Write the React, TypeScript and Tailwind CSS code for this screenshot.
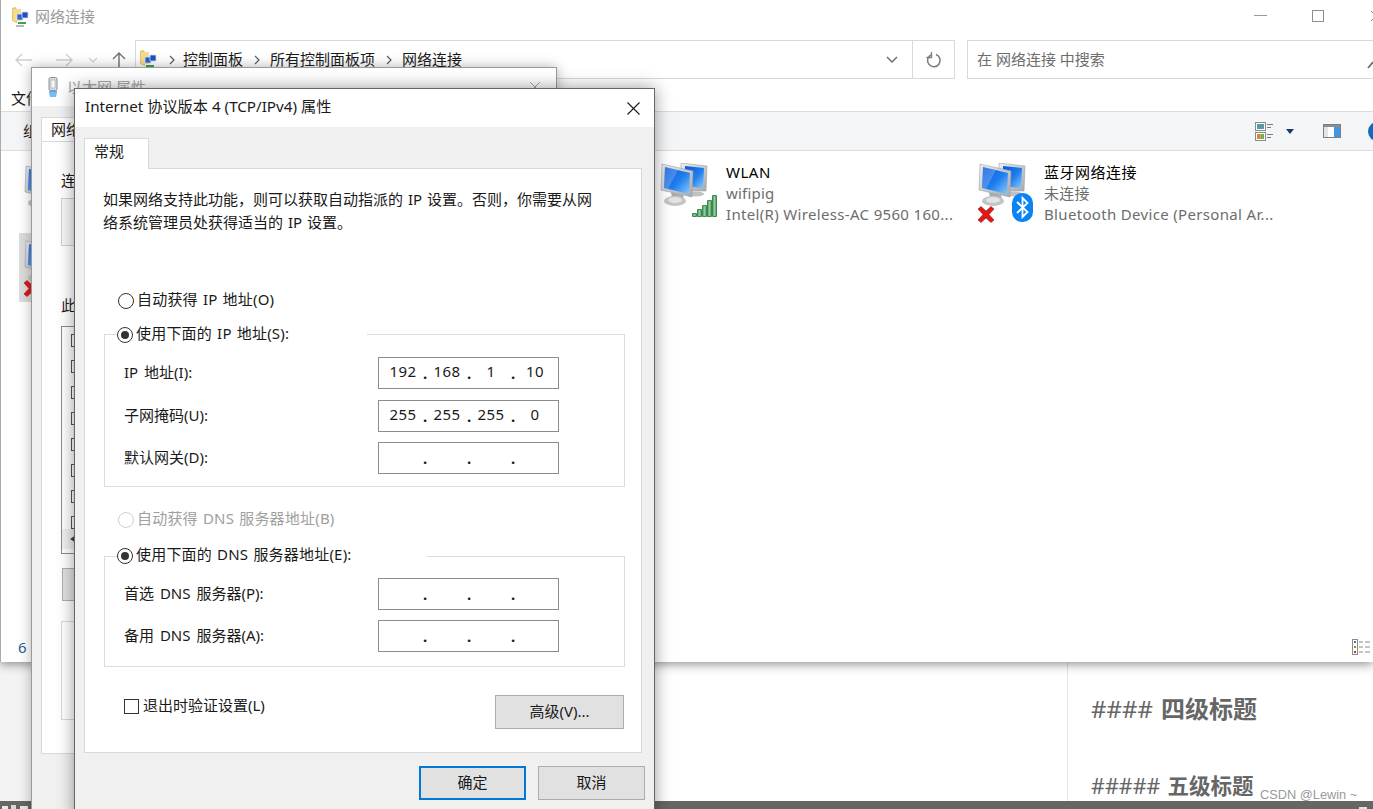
import React from "react";

const sans = "font-['Noto_Sans','Noto_Sans_CJK_SC',sans-serif]";

function NetworkIcon({ className = "" }: { className?: string }) {
  return (
    <svg viewBox="0 0 48 44" width={48} height={44} className={className}>
      <defs>
        <linearGradient id="scr" x1="0" y1="0" x2="1" y2="1">
          <stop offset="0" stopColor="#0a56dc" />
          <stop offset="0.55" stopColor="#1f7fee" />
          <stop offset="1" stopColor="#8fcbf8" />
        </linearGradient>
        <linearGradient id="bez" x1="0" y1="0" x2="1" y2="1">
          <stop offset="0" stopColor="#eceef0" />
          <stop offset="1" stopColor="#a4a9ad" />
        </linearGradient>
      </defs>
      <path d="M21 0 L47 3 L46 28 L30 28 L21 25 Z" fill="url(#bez)" stroke="#9ca1a5" strokeWidth="0.6" />
      <path d="M25 3 L44 5 L43 25 L25 23 Z" fill="url(#scr)" />
      <ellipse cx="36" cy="31" rx="8" ry="2.5" fill="#bfc2c3" />
      <path d="M2 1 L33 8 L32 34 L1 27 Z" fill="url(#bez)" stroke="#9ca1a5" strokeWidth="0.6" />
      <path d="M5 4 L30 10 L29 31 L4 25 Z" fill="url(#scr)" />
      <path d="M5 4 L18 7 L8 26 L4 25 Z" fill="#ffffff" opacity="0.2" />
      <path d="M11 29 L23 32 L24 36 L12 35 Z" fill="#a8acae" />
      <ellipse cx="15" cy="38" rx="11" ry="5" fill="#c2c4c5" />
      <ellipse cx="15" cy="37" rx="7" ry="3" fill="#e2e3e4" />
    </svg>
  );
}

function FolderIcon() {
  return (
    <svg viewBox="0 0 18 20" width={18} height={20} className="shrink-0">
      <path d="M1 1 L5 0 L6 3 L6 16 L1 14 Z" fill="#e6c568" />
      <path d="M2 2 L10 2 L10 14 L2 14 Z" fill="#f3dc8e" />
      <path d="M6 7 L12 7 L12 13 L6 13 Z" fill="#2a62d8" stroke="#d8dde0" strokeWidth="0.8" />
      <path d="M11 5 L17 5 L17 11 L11 11 Z" fill="#1e4fc4" stroke="#d8dde0" strokeWidth="0.8" />
      <path d="M7 15 L15 15 L15 17 L7 17 Z" fill="#3fa34d" />
      <path d="M5 18 L13 18 L13 20 L5 20 Z" fill="#b5b9ba" />
    </svg>
  );
}

function RedCross({ className = "" }: { className?: string }) {
  return (
    <svg viewBox="0 0 18 17" width={18} height={17} className={className}>
      <path d="M1 3 L4 0.5 L9 5 L14 0.5 L17 3 L12 8.5 L17 14 L14 16.5 L9 12 L4 16.5 L1 14 L6 8.5 Z" fill="#dd1a1a" stroke="#b01010" strokeWidth="0.6" />
    </svg>
  );
}

function SignalBars({ className = "" }: { className?: string }) {
  const bars = [
    [0, 18, 4],
    [5, 14, 8],
    [10, 10, 12],
    [15, 5, 17],
    [20, 0, 22],
  ];
  return (
    <svg viewBox="0 0 25 22" width={25} height={22} className={className}>
      {bars.map(([x, y, h]) => (
        <g key={x}>
          <rect x={x} y={y} width={5} height={h} rx={1} fill="#3a8a4e" />
          <rect x={x + 1.4} y={y + 1} width={2.2} height={h - 2} fill="#93caa0" />
        </g>
      ))}
    </svg>
  );
}

function BluetoothBadge({ className = "" }: { className?: string }) {
  return (
    <svg viewBox="0 0 21 29" width={21} height={29} className={className}>
      <rect x="0" y="0" width="21" height="29" rx="10" fill="#0a84f5" />
      <path d="M5 9 L15.5 19 L10.5 24 L10.5 5 L15.5 10 L5 20" fill="none" stroke="#ffffff" strokeWidth="1.8" />
    </svg>
  );
}

function ViewIcon() {
  return (
    <svg viewBox="0 0 19 19" width={19} height={19}>
      <rect x="0.5" y="0.5" width="10" height="8" fill="#fff" stroke="#8a8a8a" />
      <rect x="2" y="2" width="7" height="5" fill="#5a9a9c" />
      <rect x="0.5" y="10.5" width="10" height="8" fill="#fff" stroke="#8a8a8a" />
      <rect x="2" y="12" width="3.5" height="5" fill="#d8882e" />
      <rect x="5.5" y="12" width="3.5" height="5" fill="#7fa94a" />
      <path d="M12 2.5 H18 M12 5.5 H16 M12 12.5 H18 M12 15.5 H16" stroke="#7a7a7a" strokeWidth="1" />
    </svg>
  );
}

function PaneIcon() {
  return (
    <svg viewBox="0 0 18 14" width={18} height={14}>
      <rect x="0.5" y="0.5" width="17" height="13" fill="#fff" stroke="#7f7f7f" />
      <rect x="1" y="1" width="16" height="2" fill="#8c8c8c" />
      <rect x="1" y="3" width="4" height="10" fill="#e4e4e4" />
      <rect x="11" y="3" width="6" height="10" fill="#3f97e6" />
    </svg>
  );
}

function ListViewIcon() {
  return (
    <svg viewBox="0 0 18 16" width={18} height={16}>
      <rect x="0.5" y="0.5" width="5" height="15" fill="#fff" stroke="#8a8a8a" />
      <rect x="2" y="2" width="2" height="2" fill="#3a7ea6" />
      <rect x="2" y="7" width="2" height="2" fill="#9a8a2e" />
      <rect x="2" y="12" width="2" height="2" fill="#b5381f" />
      <path d="M7 3 H11 M13 3 H18 M7 8 H11 M13 8 H18 M7 13 H11 M13 13 H18" stroke="#8a8a8a" strokeWidth="1" />
    </svg>
  );
}

function ConnectorIcon() {
  return (
    <svg viewBox="0 0 14 20" width={14} height={20} className="shrink-0">
      <rect x="3" y="0.5" width="8" height="13" rx="1.5" fill="#d5dade" stroke="#8a9298" />
      <rect x="5" y="3" width="4" height="8" fill="#f5f6f7" stroke="#a5abaf" strokeWidth="0.6" />
      <path d="M3 14 H11 L10 20 H4 Z" fill="#4aa8e8" />
      <path d="M5 15 V20 M7 15 V20 M9 15 V20" stroke="#d6effc" strokeWidth="0.6" />
    </svg>
  );
}

function Chevron({ className = "" }: { className?: string }) {
  return (
    <svg viewBox="0 0 6 10" width={6} height={10} className={className}>
      <path d="M1 1 L5 5 L1 9" fill="none" stroke="#5f5f5f" strokeWidth="1.2" />
    </svg>
  );
}

function Adapter({ name, status, device, children }: { name: string; status: string; device: string; children: React.ReactNode }) {
  return (
    <div className="relative flex h-[69px] pl-[5px] pt-[3px]">
      <div className="relative h-[60px] w-[66px] shrink-0">
        <NetworkIcon />
        {children}
      </div>
      <div className="-mt-[1px] text-[15px] leading-[21px]">
        <div className="text-black tracking-[0.5px]">{name}</div>
        <div className="text-[#6d6d6d] tracking-[0.2px]">{status}</div>
        <div className="whitespace-nowrap text-[#6d6d6d] tracking-[0.33px]">{device}</div>
      </div>
    </div>
  );
}

function Radio({ checked = false, disabled = false }: { checked?: boolean; disabled?: boolean }) {
  return (
    <span className={`flex h-[16px] w-[16px] shrink-0 items-center justify-center rounded-full border bg-white ${disabled ? "border-[#cfcfcf]" : "border-[#333]"}`}>
      {checked && <span className="h-[8px] w-[8px] rounded-full bg-[#333]" />}
    </span>
  );
}

function RadioRow({ label, checked, disabled, className = "" }: { label: string; checked?: boolean; disabled?: boolean; className?: string }) {
  return (
    <div className={`flex h-[24px] items-center gap-[3px] text-[15px] ${disabled ? "text-[#a0a0a0]" : "text-[#1a1a1a]"} ${className}`}>
      <Radio checked={checked} disabled={disabled} />
      <span className="-mt-[3px] whitespace-nowrap tracking-[0.2px] [word-spacing:1px]">{label}</span>
    </div>
  );
}

function IpField({ label, octets = ["", "", "", ""], className = "" }: { label: string; octets?: string[]; className?: string }) {
  return (
    <div className={`flex h-[32px] items-center pl-[19px] ${className}`}>
      <div className="-mt-[2px] w-[254px] whitespace-nowrap text-[15px] text-[#1a1a1a] [word-spacing:2px]">{label}</div>
      <div className="flex h-[32px] w-[181px] items-center border border-[#8c8c8c] bg-white pl-[6px] text-[15px] text-[#1a1a1a]">
        {octets.map((o, i) => (
          <React.Fragment key={i}>
            <span className="-mt-[3px] w-[36px] text-center tracking-[0.4px]">{o}</span>
            {i < 3 && <span className="w-[8px] text-center font-bold leading-none">.</span>}
          </React.Fragment>
        ))}
      </div>
    </div>
  );
}

function Button({ children, className = "" }: { children: React.ReactNode; className?: string }) {
  return (
    <button className={`flex h-[34px] items-center justify-center bg-[#e1e1e1] pb-[2px] text-[15px] text-[#1a1a1a] ${className}`}>
      {children}
    </button>
  );
}

function ListCheck({ checked = true }: { checked?: boolean }) {
  return (
    <div className="flex h-[26px] items-center pl-[9px]">
      <span className="flex h-[13px] w-[13px] items-center justify-center border border-[#555] bg-white">
        {checked && <span className="h-[5px] w-[5px] bg-[#333]" />}
      </span>
    </div>
  );
}

export default function App() {
  return (
    <div className={`relative h-[809px] w-[1373px] overflow-hidden bg-white ${sans}`}>
      {/* Blog page behind the windows */}
      <div className="flex h-[801px]">
        <div className="w-[31px] bg-[#f3f3f3]" />
        <div className="w-[1036px] bg-white" />
        <div className="flex-1 border-l border-[#e3e3e3] pl-[23px] pt-[689px] text-[#666]">
          <div className="flex h-[40px] items-center gap-[8px] whitespace-nowrap text-[24px]">
            <span>####</span>
            <span className="font-bold">四级标题</span>
          </div>
          <div className="mt-[39px] flex h-[36px] items-center gap-[7px] whitespace-nowrap text-[21.5px]">
            <span>#####</span>
            <span className="font-bold">五级标题</span>
          </div>
        </div>
      </div>
      <div className="flex h-[8px] items-end bg-[#666]">
        <span className="ml-[2px] h-[3px] w-[6px] bg-[#e8e8e8]" />
        <span className="ml-[3px] h-[4px] w-[5px] bg-[#d8d8d8]" />
        <span className="ml-[4px] h-[3px] w-[8px] bg-[#e8e8e8]" />
        <span className="ml-[1331px] h-[2px] w-[8px] bg-[#e0e0e0]" />
      </div>

      {/* File explorer */}
      <div className="absolute left-0 top-0 flex h-[662px] w-[1373px] flex-col border-l border-[#ababab] bg-white shadow-[0_2px_10px_rgba(0,0,0,0.45)]">
        <div className="flex h-[40px] items-center pl-[10px]">
          <div className="-mt-[7px] flex items-center gap-[6px] text-[15px] text-[#9a9a9a]">
            <FolderIcon />
            <span>网络连接</span>
          </div>
          <div className="-mr-[9px] -mt-[9px] ml-auto flex items-center">
            <span className="h-px w-[13px] bg-[#9a9a9a]" />
            <span className="ml-[45px] h-[12px] w-[12px] border border-[#8f8f8f]" />
            <svg viewBox="0 0 12 12" width={12} height={12} className="ml-[46px] shrink-0">
              <path d="M1 1 L11 11 M11 1 L1 11" stroke="#8f8f8f" strokeWidth="1" />
            </svg>
          </div>
        </div>

        <div className="flex h-[39px] items-center">
          <div className="flex w-[134px] items-center">
            <svg viewBox="0 0 18 14" width={18} height={14} className="ml-[14px]">
              <path d="M17 7 H1 M7 1 L1 7 L7 13" fill="none" stroke="#cfcfcf" strokeWidth="1.3" />
            </svg>
            <svg viewBox="0 0 18 14" width={18} height={14} className="ml-[22px]">
              <path d="M1 7 H17 M11 1 L17 7 L11 13" fill="none" stroke="#cfcfcf" strokeWidth="1.3" />
            </svg>
            <svg viewBox="0 0 10 6" width={10} height={6} className="ml-[15px]">
              <path d="M1 1 L5 5 L9 1" fill="none" stroke="#cfcfcf" strokeWidth="1.2" />
            </svg>
            <svg viewBox="0 0 14 16" width={14} height={16} className="ml-[14px]">
              <path d="M7 16 V1 M1 7 L7 1 L13 7" fill="none" stroke="#707070" strokeWidth="1.4" />
            </svg>
          </div>
          <div className="flex h-[39px] w-[820px] items-center border border-[#d9d9d9] pl-[3px]">
            <FolderIcon />
            <Chevron className="ml-[12px]" />
            <span className="ml-[8px] text-[15px] text-[#1a1a1a]">控制面板</span>
            <Chevron className="ml-[11px]" />
            <span className="ml-[10px] text-[15px] text-[#1a1a1a]">所有控制面板项</span>
            <Chevron className="ml-[11px]" />
            <span className="ml-[10px] text-[15px] text-[#1a1a1a]">网络连接</span>
            <svg viewBox="0 0 12 8" width={12} height={8} className="ml-auto mr-[14px]">
              <path d="M1 1 L6 6 L11 1" fill="none" stroke="#6f6f6f" strokeWidth="1.5" />
            </svg>
            <div className="flex h-full w-[42px] items-center justify-center border-l border-[#d9d9d9]">
              <svg viewBox="0 0 16 16" width={16} height={16}>
                <path d="M10 2.5 A6.3 6.3 0 1 1 5 2.8" fill="none" stroke="#7a7a7a" strokeWidth="1.5" />
                <path d="M5.5 0 V5.5 H0.5" fill="none" stroke="#7a7a7a" strokeWidth="1.3" />
              </svg>
            </div>
          </div>
          <div className="ml-[12px] flex h-[39px] flex-1 items-center border border-r-0 border-[#d9d9d9] pl-[9px] text-[15px] text-[#6d6d6d]">
            <span>在 网络连接 中搜索</span>
            <svg viewBox="0 0 8 10" width={8} height={10} className="-mr-[2px] ml-auto mt-[8px]">
              <path d="M1 9 L6 3" stroke="#6f6f6f" strokeWidth="1.8" />
            </svg>
          </div>
        </div>

        <div className="flex h-[32px] items-center pl-[10px] pt-[6px] text-[15px] text-[#1a1a1a]">文件</div>

        <div className="flex h-[40px] items-center border-y border-[#dcdcdc] bg-[#f4f5f7] pl-[22px] text-[15px] text-[#1a1a1a]">
          <span>组织</span>
          <div className="ml-auto flex items-center">
            <ViewIcon />
            <svg viewBox="0 0 8 5" width={8} height={5} className="ml-[12px]">
              <path d="M0 0 H8 L4 5 Z" fill="#1b3a63" />
            </svg>
            <span className="ml-[29px]"><PaneIcon /></span>
            <span className="-mr-[7px] ml-[27px] h-[19px] w-[12px] overflow-hidden rounded-l-full bg-[#0f6cbd]" />
          </div>
        </div>

        <div className="grid flex-1 grid-cols-[repeat(4,318px)] content-start gap-y-[4px] pl-[18px] pt-[9px]">
          <div className="relative pl-[5px] pt-[5px]"><NetworkIcon /></div>
          <div />
          <Adapter name="WLAN" status="wifipig" device="Intel(R) Wireless-AC 9560 160...">
            <SignalBars className="absolute left-[32px] top-[32px]" />
          </Adapter>
          <Adapter name="蓝牙网络连接" status="未连接" device="Bluetooth Device (Personal Ar...">
            <RedCross className="absolute left-[-1px] top-[43px]" />
            <BluetoothBadge className="absolute left-[34px] top-[30px]" />
          </Adapter>
          <div className="relative h-[69px] bg-[#dcdcdc] pl-[5px] pt-[7px]">
            <NetworkIcon />
            <RedCross className="absolute left-[4px] top-[47px]" />
          </div>
        </div>

        <div className="flex h-[36px] items-center pl-[17px] pr-[3px] text-[15px] text-[#1f5f99]">
          <span className="mt-[6px]">6</span>
          <span className="ml-auto mt-[6px]"><ListViewIcon /></span>
        </div>
      </div>

      {/* Ethernet properties */}
      <div className="absolute left-[31px] top-[67px] flex h-[760px] w-[526px] flex-col border border-[#9a9a9a] bg-[#f0f0f0] shadow-[0_0_12px_rgba(0,0,0,0.3)]">
        <div className="flex h-[38px] shrink-0 items-center bg-white pl-[14px] pr-[15px] text-[15px] text-[#a5a5a5]">
          <ConnectorIcon />
          <span className="ml-[7px]">以太网 属性</span>
          <svg viewBox="0 0 12 12" width={12} height={12} className="ml-auto">
            <path d="M1 1 L11 11 M11 1 L1 11" stroke="#a5a5a5" strokeWidth="1" />
          </svg>
        </div>
        <div className="ml-[9px] mt-[11px] flex h-[24px] w-[60px] items-center border border-b-0 border-[#d9d9d9] bg-white pl-[9px] text-[15px] text-[#1a1a1a]">网络</div>
        <div className="ml-[9px] h-[613px] w-[505px] border border-[#d9d9d9] bg-white pl-[19px] pt-[27px] text-[15px] text-[#1a1a1a]">
          <div className="h-[20px]">连</div>
          <div className="mt-[9px] h-[48px] w-[465px] border border-[#d0d0d0] bg-[#f7f7f7]" />
          <div className="mt-[48px] h-[20px]">此</div>
          <div className="mt-[12px] h-[228px] w-[465px] border border-[#8c8c8c] bg-white">
            <ListCheck />
            <ListCheck />
            <ListCheck />
            <ListCheck />
            <ListCheck />
            <ListCheck />
            <ListCheck checked={false} />
            <ListCheck />
            <div className="relative -mt-[6px] flex h-[20px] items-center bg-[#f0f0f0] pl-[8px]">
              <svg viewBox="0 0 6 8" width={6} height={8}><path d="M6 0 V8 L0 4 Z" fill="#444" /></svg>
            </div>
          </div>
          <div className="ml-[1px] mt-[14px] h-[33px] w-[100px] border border-[#adadad] bg-[#e1e1e1]" />
          <div className="mt-[20px] h-[99px] w-[465px] border border-[#d9d9d9]" />
        </div>
      </div>

      {/* TCP/IPv4 properties */}
      <div className="absolute left-[74px] top-[88px] flex h-[730px] w-[581px] flex-col border border-[#666] bg-[#f0f0f0] shadow-[0_0_16px_rgba(0,0,0,0.4)]">
        <div className="flex h-[38px] shrink-0 items-center bg-white pl-[10px] pr-[14px] text-[15.2px] text-[#1a1a1a]">
          <span className="-mt-[3px]">Internet 协议版本 4 (TCP/IPv4) 属性</span>
          <svg viewBox="0 0 13 13" width={13} height={13} className="ml-auto">
            <path d="M0.5 0.5 L12.5 12.5 M12.5 0.5 L0.5 12.5" stroke="#1a1a1a" strokeWidth="1.1" />
          </svg>
        </div>
        <div className="relative z-10 -mb-px ml-[9px] mt-[11px] flex h-[31px] w-[65px] items-center border border-b-0 border-[#d9d9d9] bg-white pb-[5px] pl-[9px] text-[15px] text-[#1a1a1a]">常规</div>
        <div className="ml-[9px] h-[585px] w-[558px] shrink-0 border border-[#d9d9d9] bg-white pt-[19px]">
          <p className="whitespace-nowrap pl-[18px] text-[15px] leading-[23px] text-[#1a1a1a] [word-spacing:1px]">
            如果网络支持此功能，则可以获取自动指派的 IP 设置。否则，你需要从网
            <br />
            络系统管理员处获得适当的 IP 设置。
          </p>
          <RadioRow label="自动获得 IP 地址(O)" className="ml-[33px] mt-[55px]" />
          <div className="ml-[19px] mt-[21px] h-[153px] w-[521px] border border-[#dcdcdc]">
            <div className="-mt-[12px] ml-[12px] w-[250px] bg-white">
              <RadioRow label="使用下面的 IP 地址(S):" checked />
            </div>
            <IpField label="IP 地址(I):" octets={["192", "168", "1", "10"]} className="mt-[10px]" />
            <IpField label="子网掩码(U):" octets={["255", "255", "255", "0"]} className="mt-[11px]" />
            <IpField label="默认网关(D):" className="mt-[10px]" />
          </div>
          <RadioRow label="自动获得 DNS 服务器地址(B)" disabled className="ml-[33px] mt-[21px]" />
          <div className="ml-[19px] mt-[24px] h-[111px] w-[521px] border border-[#dcdcdc]">
            <div className="-mt-[13px] ml-[12px] w-[310px] bg-white">
              <RadioRow label="使用下面的 DNS 服务器地址(E):" checked />
            </div>
            <IpField label="首选 DNS 服务器(P):" className="mt-[10px]" />
            <IpField label="备用 DNS 服务器(A):" className="mt-[10px]" />
          </div>
          <div className="ml-[19px] mt-[28px] flex w-[521px] items-start pl-[20px] pr-[1px]">
            <div className="flex h-[22px] items-center gap-[4px] text-[15px] text-[#1a1a1a]">
              <span className="h-[15px] w-[15px] border border-[#333] bg-white" />
              <span className="-mt-[2px]">退出时验证设置(L)</span>
            </div>
            <Button className="ml-auto w-[129px] border border-[#adadad]">高级(V)...</Button>
          </div>
        </div>
        <div className="mt-[13px] flex justify-end gap-[12px] pr-[9px]">
          <Button className="w-[107px] border-2 border-[#0078d7]">确定</Button>
          <Button className="w-[107px] border border-[#adadad]">取消</Button>
        </div>
      </div>

      {/* Watermark stamped on the image */}
      <div className="absolute left-[1260px] top-[785px] font-['Liberation_Sans',sans-serif] text-[12.8px] text-[#9a9a9a]">CSDN @Lewin ~</div>
    </div>
  );
}
